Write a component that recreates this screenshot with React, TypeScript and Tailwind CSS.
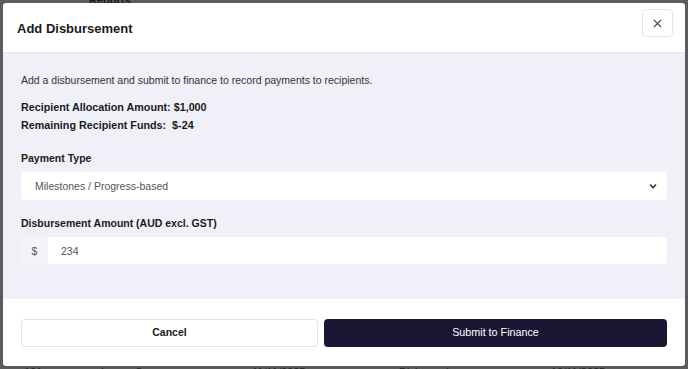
import React from "react";

export default function App() {
  return (
    <div
      className="relative h-[369px] w-[688px] overflow-hidden bg-[#5c5c5c]"
      style={{ fontFamily: '"Liberation Sans", Arial, sans-serif' }}
    >
      {/* page underneath the overlay */}
      <div className="pointer-events-none absolute inset-0 text-[11px] text-[#1a1a1a]">
        <div className="absolute left-[89px] top-[-8px] font-bold">Reports</div>
        <div className="absolute left-0 top-[364px] flex w-full text-[#222]">
          <span className="ml-[24px] w-[77px]">101</span>
          <span className="w-[151px]">Lorem Sam</span>
          <span className="w-[147px]">11/11/2025</span>
          <span className="w-[152px]">Disbursed</span>
          <span>10/11/2025</span>
        </div>
      </div>

      <div className="absolute left-[3px] top-[3px] flex h-[363px] w-[682px] flex-col overflow-hidden rounded-[3px] bg-white">
        <div className="flex h-[50px] shrink-0 items-center justify-between border-b border-[#e6e6ee] pl-[14px] pr-[12px]">
          <h2 className="mt-[3px] text-[13px] font-bold text-[#1a1a1a]">Add Disbursement</h2>
          <button
            type="button"
            className="mt-[-9px] flex h-[28px] w-[31px] items-center justify-center rounded-[4px] border border-[#e6e6e6] text-[#444]"
          >
            <svg width="9" height="9" viewBox="0 0 10 10" stroke="currentColor" strokeWidth="1.4">
              <path d="M1 1l8 8M9 1l-8 8" />
            </svg>
          </button>
        </div>

        <div className="flex h-[246px] shrink-0 flex-col bg-[#f0f0f8] px-[18px] pt-[20px] text-[10.5px] leading-[14px]">
          <p className="text-[#333]">
            Add a disbursement and submit to finance to record payments to recipients.
          </p>
          <div className="mt-[13px] flex flex-col gap-[4px] text-[10.75px] font-bold text-[#1a1a1a]">
            <div>Recipient Allocation Amount:&nbsp;$1,000</div>
            <div>Remaining Recipient Funds:&nbsp;&nbsp;$-24</div>
          </div>

          <label className="mt-[19px] font-bold text-[#1a1a1a]">Payment Type</label>
          <div className="mt-[7px] flex h-[28px] items-center justify-between rounded-[3px] bg-white pl-[14px] pr-[10px] text-[#555]">
            <span>Milestones / Progress-based</span>
            <svg width="8" height="6" viewBox="0 0 8 6" fill="none" stroke="#333" strokeWidth="1.6">
              <path d="M1 1.5l3 3 3-3" />
            </svg>
          </div>

          <label className="mt-[16px] font-bold text-[#1a1a1a]">
            Disbursement Amount (AUD excl. GST)
          </label>
          <div className="mt-[7px] flex h-[27px] overflow-hidden rounded-[3px] bg-white text-[#555]">
            <span className="flex w-[27px] items-center justify-center bg-[#f4f4f8]">$</span>
            <span className="flex items-center pl-[13px]">234</span>
          </div>
        </div>

        <div className="flex flex-1 items-center gap-[6px] px-[18px]">
          <button
            type="button"
            className="h-[28px] flex-1 rounded-[4px] border border-[#e3e3e3] bg-white text-[10.5px] font-bold text-[#1a1a1a]"
          >
            Cancel
          </button>
          <button
            type="button"
            className="h-[28px] w-[343px] rounded-[4px] bg-[#1b1634] text-[10.75px] text-white"
          >
            Submit to Finance
          </button>
        </div>
      </div>
    </div>
  );
}
